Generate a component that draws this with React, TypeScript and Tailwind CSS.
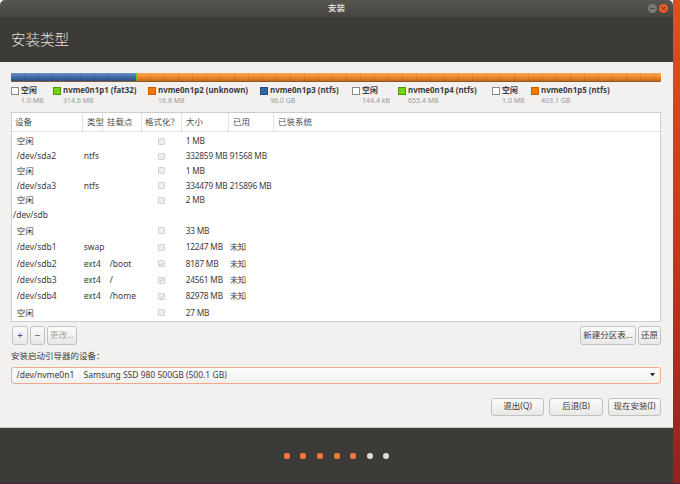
import React from 'react';

type Legend = { kind: 'free' | 'green' | 'orange' | 'blue'; name: string; size: string; w: string };

const legend: Legend[] = [
  { kind: 'free', name: '空闲', size: '1.0 MB', w: 'w-[42px]' },
  { kind: 'green', name: 'nvme0n1p1 (fat32)', size: '314.6 MB', w: 'w-[95px]' },
  { kind: 'orange', name: 'nvme0n1p2 (unknown)', size: '16.8 MB', w: 'w-[112px]' },
  { kind: 'blue', name: 'nvme0n1p3 (ntfs)', size: '96.0 GB', w: 'w-[92px]' },
  { kind: 'free', name: '空闲', size: '144.4 kB', w: 'w-[46px]' },
  { kind: 'green', name: 'nvme0n1p4 (ntfs)', size: '655.4 MB', w: 'w-[94px]' },
  { kind: 'free', name: '空闲', size: '1.0 MB', w: 'w-[39px]' },
  { kind: 'orange', name: 'nvme0n1p5 (ntfs)', size: '403.1 GB', w: 'w-[100px]' },
];

const markerClass: Record<Legend['kind'], string> = {
  free: 'bg-white border border-[#8a8a8a]',
  green: 'bg-[#73d216] border border-[#4e9a06]',
  orange: 'bg-[#f57900] border border-[#ce5c00]',
  blue: 'bg-[#3465a4] border border-[#204a87]',
};

type Row = { dev: string; type?: string; mount?: string; fmt?: boolean; size?: string; used?: string; disk?: boolean };

const rows: Row[] = [
  { dev: '空闲', size: '1 MB' },
  { dev: '/dev/sda2', type: 'ntfs', size: '332859 MB', used: '91568 MB' },
  { dev: '空闲', size: '1 MB' },
  { dev: '/dev/sda3', type: 'ntfs', size: '334479 MB', used: '215896 MB' },
  { dev: '空闲', size: '2 MB' },
  { dev: '/dev/sdb', disk: true },
  { dev: '空闲', size: '33 MB' },
  { dev: '/dev/sdb1', type: 'swap', size: '12247 MB', used: '未知' },
  { dev: '/dev/sdb2', type: 'ext4', mount: '/boot', fmt: true, size: '8187 MB', used: '未知' },
  { dev: '/dev/sdb3', type: 'ext4', mount: '/', fmt: true, size: '24561 MB', used: '未知' },
  { dev: '/dev/sdb4', type: 'ext4', mount: '/home', fmt: true, size: '82978 MB', used: '未知' },
  { dev: '空闲', size: '27 MB' },
];

const headers = [
  { label: '设备', cls: 'w-[71px] pl-[3px] border-r' },
  { label: '类型', cls: 'w-[20px] pl-[4px] border-r' },
  { label: '挂载点', cls: 'w-[39px] pl-[4px] border-r' },
  { label: '格式化？', cls: 'w-[40px] pl-[3px] border-r' },
  { label: '大小', cls: 'w-[47px] pl-[4px] border-r' },
  { label: '已用', cls: 'w-[45px] pl-[4px] border-r' },
  { label: '已装系统', cls: 'flex-1 pl-[4px]' },
];

const btn =
  'h-full flex items-center justify-center rounded-[3px] border border-[#c3c1bd] bg-gradient-to-b from-[#fbfbfa] to-[#e9e8e6] text-[8.5px] text-[#3c3c3c]';

const Check: React.FC<{ on?: boolean }> = ({ on }) => (
  <div className="w-[7px] h-[7px] rounded-[1px] border border-[#d2d2d2] bg-[#efefef] flex items-center justify-center">
    {on && (
      <svg viewBox="0 0 8 8" className="w-[6px] h-[6px]">
        <path d="M1.2 4.2 L3 6 L6.8 1.8" fill="none" stroke="#a8a8a8" strokeWidth="1" />
      </svg>
    )}
  </div>
);

export default function App() {
  return (
    <div className="w-[680px] h-[484px] flex flex-col overflow-hidden font-['Noto_Sans','Noto_Sans_CJK_SC',sans-serif] text-[#3c3c3c]">
      <div className="flex flex-1 min-h-0">
        <div className="w-[673px] flex flex-col">
          {/* title bar */}
          <div className="relative h-[17px] rounded-t-[5px] bg-gradient-to-b from-[#57554f] to-[#47453f] flex items-center justify-center">
            <span className="text-[8.5px] text-[#dcd8cf] font-semibold leading-none">安装</span>
            <div className="absolute right-[5px] top-[4px] flex gap-[2px]">
              <div className="w-[9px] h-[9px] rounded-full bg-[#7b7975] flex items-center justify-center">
                <div className="w-[5px] h-[1px] bg-[#4a4845]" />
              </div>
              <div className="w-[9px] h-[9px] rounded-full bg-[#ec5b24] flex items-center justify-center">
                <svg viewBox="0 0 8 8" className="w-[5px] h-[5px]">
                  <path d="M1.5 1.5 L6.5 6.5 M6.5 1.5 L1.5 6.5" stroke="#3a2a22" strokeWidth="1.3" />
                </svg>
              </div>
            </div>
          </div>

          {/* header */}
          <div className="h-[45px] bg-[#3c3b37] flex items-center pl-[11px]">
            <h1 className="text-[14.5px] text-[#e4e2dd] font-light leading-none">安装类型</h1>
          </div>

          {/* content */}
          <div className="h-[365px] bg-[#f2f1f0] pl-[11px] pr-[12px] pt-[11px] flex flex-col">
            {/* partition bar */}
            <div className="relative h-[9px] flex rounded-[1px] overflow-hidden border-b border-[#8a5a2a]">
              <div className="w-[125px] bg-gradient-to-b from-[#6c93c6] via-[#3f6ba7] to-[#2c4f84]" />
              <div className="w-[1px] bg-[#73d216]" />
              <div className="flex-1 bg-gradient-to-b from-[#f8a851] via-[#f08b2c] to-[#c8681b]" />
              <div className="absolute inset-0 bg-[repeating-linear-gradient(90deg,transparent_0_13px,rgba(0,0,0,0.09)_13px_14px)]" />
            </div>

            {/* legend */}
            <div className="flex mt-[3px]">
              {legend.map((l, i) => (
                <div key={i} className={`${l.w} shrink-0 flex`}>
                  <div className={`w-[8px] h-[8px] mt-[2px] shrink-0 ${markerClass[l.kind]}`} />
                  <div className="ml-[2px] flex flex-col">
                    <span className="h-[11px] leading-[11px] text-[7.9px] font-bold text-[#3c3c3c] whitespace-nowrap">{l.name}</span>
                    <span className="h-[9px] leading-[9px] text-[7px] text-[#9a9a9a] whitespace-nowrap">{l.size}</span>
                  </div>
                </div>
              ))}
            </div>

            {/* table */}
            <div className="mt-[7px] h-[210px] border border-[#cfcdca] bg-white flex flex-col overflow-hidden">
              <div className="h-[19px] flex border-b border-[#e2e0dd] shrink-0">
                {headers.map((h, i) => (
                  <div key={i} className={`${h.cls} border-[#e4e2df] h-full flex items-center text-[8.5px] text-[#4e4e4e] whitespace-nowrap`}>
                    {h.label}
                  </div>
                ))}
              </div>
              <div className="pt-[2px] flex flex-col">
                {rows.map((r, i) => (
                  <div key={i} className={`${i < 6 ? 'h-[14.8px]' : 'h-[16.4px]'} shrink-0 text-[8.5px] leading-none`}>
                    {r.disk ? (
                      <div className="h-full flex items-center pl-[1px]">{r.dev}</div>
                    ) : (
                      <div className="h-full pl-[4.7px] grid grid-cols-[67px_26px_48px_28px_44px_1fr] items-center whitespace-nowrap">
                        <span>{r.dev}</span>
                        <span>{r.type ?? ''}</span>
                        <span>{r.mount ?? ''}</span>
                        <span>
                          <Check on={r.fmt} />
                        </span>
                        <span className="text-[8.3px] tracking-[-0.2px]">{r.size ?? ''}</span>
                        <span className="text-[8.3px] tracking-[-0.2px]">{r.used ?? ''}</span>
                      </div>
                    )}
                  </div>
                ))}
              </div>
            </div>

            {/* table buttons */}
            <div className="mt-[4px] h-[19px] flex items-center">
              <div className="flex h-full gap-[2px] ml-[1px]">
                <div className={`${btn} w-[16px] text-[#555] text-[10px]`}>+</div>
                <div className={`${btn} w-[15px] text-[#555] text-[10px]`}>−</div>
                <div className={`${btn} w-[30px] !text-[#a9a7a3]`}>更改...</div>
              </div>
              <div className="ml-auto flex h-full gap-[2px]">
                <div className={`${btn} w-[56px]`}>新建分区表...</div>
                <div className={`${btn} w-[23px]`}>还原</div>
              </div>
            </div>

            {/* bootloader */}
            <div className="mt-[6px] h-[10px] leading-[10px] text-[8.5px] text-[#3c3c3c]">安装启动引导器的设备：</div>
            <div className="mt-[5.5px] h-[17px] rounded-[3px] border border-[#eba989] bg-gradient-to-b from-[#fdfdfc] to-[#f1f0ee] flex items-center pl-[4.5px] pr-[5px] text-[8.5px]">
              <span className="w-[67px] shrink-0">/dev/nvme0n1</span>
              <span>Samsung SSD 980 500GB (500.1 GB)</span>
              <svg viewBox="0 0 6 4" className="ml-auto w-[5px] h-[3.5px]">
                <path d="M0 0 L6 0 L3 4 Z" fill="#2e2e2e" />
              </svg>
            </div>

            {/* nav buttons */}
            <div className="mt-[14px] h-[18.5px] flex justify-end gap-[5px]">
              <div className={`${btn} w-[53px]`}>退出(Q)</div>
              <div className={`${btn} w-[54px]`}>后退(B)</div>
              <div className={`${btn} w-[53px]`}>现在安装(I)</div>
            </div>
          </div>

          <div className="h-[1px] bg-[#cac8c4]" />

          {/* progress dots */}
          <div className="flex-1 bg-[#3c3b37] flex items-center justify-center gap-[10.6px]">
            <div className="w-[6px] h-[6px] rounded-[2px] bg-[#ef7442]" />
            <div className="w-[6px] h-[6px] rounded-[2px] bg-[#ef7442]" />
            <div className="w-[6px] h-[6px] rounded-[2px] bg-[#ef7442]" />
            <div className="w-[6px] h-[6px] rounded-[2px] bg-[#ef7442]" />
            <div className="w-[6px] h-[6px] rounded-[2px] bg-[#ef7442]" />
            <div className="w-[6px] h-[6px] rounded-full bg-[#dedede]" />
            <div className="w-[6px] h-[6px] rounded-full bg-[#dedede]" />
          </div>
        </div>
        <div className="flex-1 bg-gradient-to-b from-[#d6561e] via-[#bf3b1c] to-[#902222]" />
      </div>
      <div className="h-[1px] bg-[#4a2440]" />
    </div>
  );
}
